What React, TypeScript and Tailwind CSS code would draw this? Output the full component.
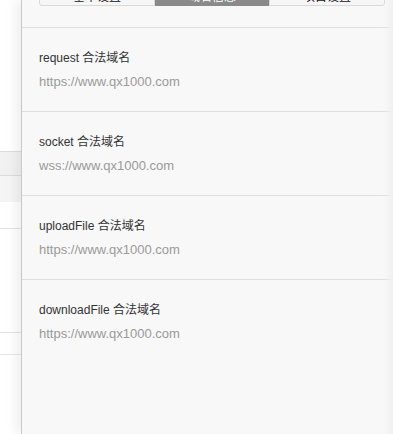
const domains = [
  { label: 'request 合法域名', url: 'https://www.qx1000.com' },
  { label: 'socket 合法域名', url: 'wss://www.qx1000.com' },
  { label: 'uploadFile 合法域名', url: 'https://www.qx1000.com' },
  { label: 'downloadFile 合法域名', url: 'https://www.qx1000.com' },
];

const tabs = ['基本设置', '域名信息', '项目设置'];

export default function App() {
  return (
    <div
      className="flex h-[434px] w-[393px] overflow-hidden bg-white"
      style={{ fontFamily: '"Liberation Sans", "Noto Sans CJK SC", sans-serif' }}
    >
      {/* page behind the drawer */}
      <div className="flex w-[21px] shrink-0 flex-col">
        <div className="h-[151px]" />
        <div className="h-[24px] border-t border-[#dcdcdc] bg-[#f1f1f1]" />
        <div className="h-[27px] border-t border-[#dcdcdc] bg-[#f5f5f5]" />
        <div className="h-[27px] border-b border-[#e2e2e2]" />
        <div className="h-[104px] border-b border-[#e2e2e2]" />
        <div className="h-[22px] border-b border-[#e6e6e6]" />
      </div>

      {/* drawer */}
      <div className="relative flex flex-1 flex-col border-l border-[#c9c9c9] bg-[#f8f8f8] shadow-[-6px_0_10px_rgba(0,0,0,0.06)]">
        <div className="-mt-[16px] flex pl-[17px] pr-[8px] text-[12px] leading-[16px]">
          {tabs.map((t, i) => (
            <div
              key={t}
              className={
                i === 1
                  ? 'flex h-[22px] flex-1 items-end justify-center bg-[#8a8a8a] pb-[1px] text-white'
                  : i === 0
                    ? 'flex h-[22px] flex-1 items-end justify-center rounded-bl-[3px] border border-[#d9d9d9] bg-[#f6f6f6] text-[#111]'
                    : 'flex h-[22px] flex-1 items-end justify-center rounded-br-[3px] border border-[#d9d9d9] bg-[#f6f6f6] text-[#111]'
              }
            >
              {t}
            </div>
          ))}
        </div>

        <div className="mt-[21px] border-t border-[#dedede]">
          {domains.map((d, i) => (
            <div
              key={d.label}
              className={
                i < domains.length - 1
                  ? 'border-b border-[#dedede] pl-[17px] pt-[22px] pb-[20px]'
                  : 'pl-[17px] pt-[22px] pb-[20px]'
              }
            >
              <div className="h-[16px] text-[12px] leading-[16px] text-[#333]">{d.label}</div>
              <div className="mt-[7px] h-[18px] text-[13px] leading-[18px] text-[#9a9a9a]">{d.url}</div>
            </div>
          ))}
        </div>

        <div className="pointer-events-none absolute inset-y-0 right-0 w-[10px] bg-gradient-to-r from-transparent to-[#f0f0f0]" />
      </div>
    </div>
  );
}
